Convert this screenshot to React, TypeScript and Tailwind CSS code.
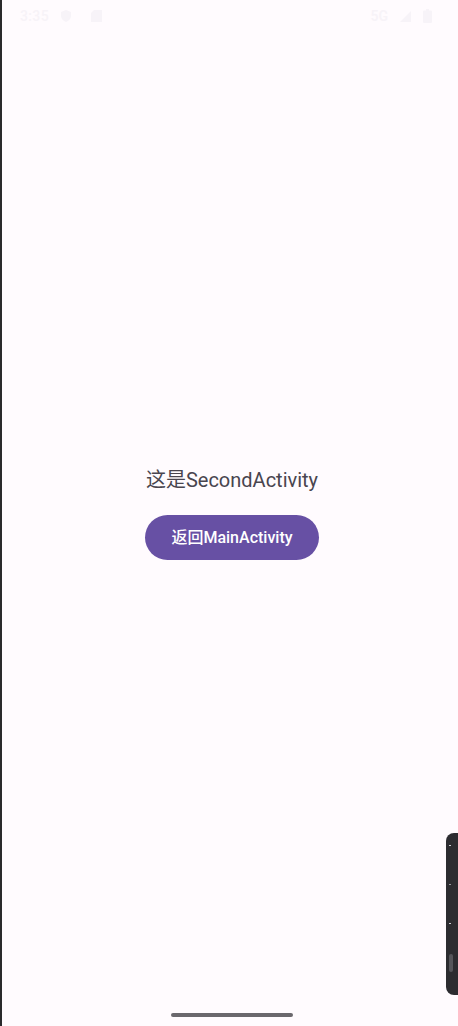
export default function App() {
  return (
    <div className="relative flex h-[1026px] w-[458px] flex-col overflow-hidden border-l-2 border-[#2a2a2c] bg-[#fffbfe] font-['Roboto','Noto_Sans_CJK_SC',sans-serif]">
      {/* status bar */}
      <div className="flex h-8 items-center justify-between pl-[18px] pr-[26px] text-[#f7f3f8]">
        <div className="flex items-center gap-2">
          <span className="text-[14px] font-medium tracking-wide">3:35</span>
          <svg width="10" height="12" viewBox="0 0 10 12" className="ml-1">
            <path d="M5 0 L10 2 V6 C10 9 7.5 11 5 12 C2.5 11 0 9 0 6 V2 Z" fill="currentColor" />
          </svg>
          <svg width="11" height="12" viewBox="0 0 11 12" className="ml-3">
            <path d="M3 0 H11 V12 H0 V3 Z" fill="currentColor" />
          </svg>
        </div>
        <div className="flex items-center gap-2">
          <span className="text-[14px] font-semibold">5G</span>
          <svg width="11" height="11" viewBox="0 0 11 11" className="ml-1">
            <path d="M11 0 V11 H0 Z" fill="currentColor" />
          </svg>
          <svg width="9" height="14" viewBox="0 0 9 14" className="ml-1">
            <rect x="3" y="0" width="3" height="2" fill="currentColor" />
            <rect x="0" y="1.5" width="9" height="12.5" rx="1" fill="currentColor" />
          </svg>
        </div>
      </div>

      {/* content */}
      <div className="flex flex-1 flex-col items-center justify-center gap-[21px] pb-2 pl-1">
        <p className="text-[20px] leading-7 text-[#49454f]">这是SecondActivity</p>
        <button className="flex h-[45px] w-[174px] items-center justify-center rounded-full bg-[#6750a4] text-[16px] font-medium text-white">
          返回MainActivity
        </button>
      </div>

      {/* nav handle */}
      <div className="flex h-6 items-start justify-center pl-1 pt-[11px]">
        <div className="h-[4px] w-[122px] rounded-full bg-[#6b686d]" />
      </div>

      {/* side panel */}
      <div className="absolute right-0 top-[833px] flex h-[162px] w-[12px] flex-col items-start gap-[38px] rounded-l-lg bg-[#2c2c30] pl-[3px] pt-[12px]">
        <div className="h-[1px] w-[2px] bg-[#cfcfd4]" />
        <div className="h-[1px] w-[2px] bg-[#9a9aa0]" />
        <div className="h-[1px] w-[2px] bg-[#cfcfd4]" />
        <div className="mt-[-8px] h-[18px] w-[4px] rounded-sm bg-[#55555a]" />
      </div>
    </div>
  )
}
